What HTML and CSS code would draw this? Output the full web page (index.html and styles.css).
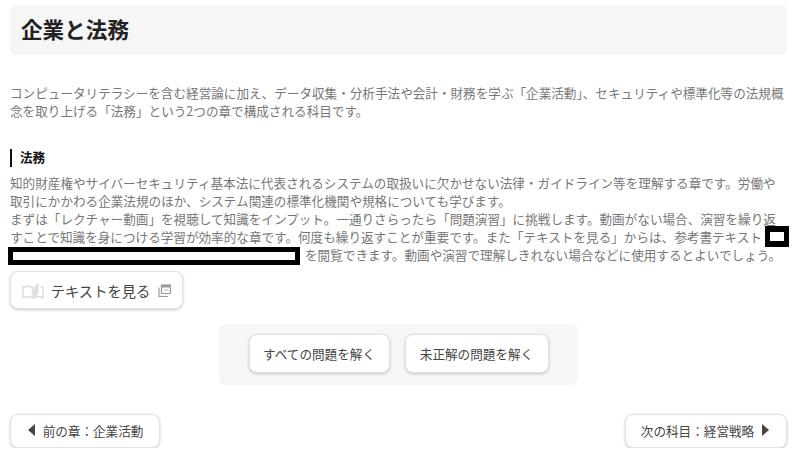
FILE: index.html
```html
<!DOCTYPE html>
<html lang="ja">
<head>
    <meta charset="UTF-8">
    <title>企業と法務</title>
    <link rel="stylesheet" href="styles.css">
</head>
<body>
    <div id="title-box">
        <h1>企業と法務</h1>
    </div>

    <p class="lead">コンピュータリテラシーを含む経営論に加え、データ収集・分析手法や会計・財務を学ぶ「企業活動」、セキュリティや標準化等の法規概念を取り上げる「法務」という2つの章で構成される科目です。</p>

    <h2>法務</h2>
    <p class="body-text">知的財産権やサイバーセキュリティ基本法に代表されるシステムの取扱いに欠かせない法律・ガイドライン等を理解する章です。労働や取引にかかわる企業法規のほか、システム関連の標準化機関や規格についても学びます。<br>まずは「レクチャー動画」を視聴して知識をインプット。一通りさらったら「問題演習」に挑戦します。動画がない場合、演習を繰り返すことで知識を身につける学習が効率的な章です。何度も繰り返すことが重要です。また「テキストを見る」からは、参考書テキスト<span class="mask mask-short"></span><br><span class="mask mask-long"></span>を閲覧できます。動画や演習で理解しきれない場合などに使用するとよいでしょう。</p>

    <a class="btn btn-text" href="#">
        <svg class="book" width="22" height="17" viewBox="0 0 22 17">
            <path d="M1 5c3-1 6.500-1 9.500 .5v10.500c-3-1.500-6.500-1.500-9.500-.5z" fill="none" stroke="#ddd" stroke-width="1.500"/>
            <path d="M11.500 5.500c1.500-1 3.500-3 5-5v10.500c-1.500 2-3.500 4-5 5z" fill="#ddd"/>
            <path d="M18.500 5h2.500v10.500c-3-1-6.500-1-9.500 .5" fill="none" stroke="#ddd" stroke-width="1.500"/>
        </svg>
        <span>テキストを見る</span>
        <svg class="open-icon" width="13" height="13" viewBox="0 0 13 13">
            <path d="M3.500 1h9v8.500h-9z" fill="none" stroke="#999" stroke-width="1.200"/>
            <path d="M3.500 1h9v2.500h-9z" fill="#999"/>
            <path d="M1 3.500v9h9" fill="none" stroke="#999" stroke-width="1.200"/>
            <path d="M5.500 6h5" stroke="#bbb" stroke-width="1"/>
        </svg>
    </a>

    <div id="solve-panel">
        <a class="btn btn-solve btn-all" href="#">すべての問題を解く</a>
        <a class="btn btn-solve btn-wrong" href="#">未正解の問題を解く</a>
    </div>

    <div id="pager">
        <a class="btn btn-page btn-prev" href="#"><span class="arrow arrow-left"></span>前の章：企業活動</a>
        <a class="btn btn-page btn-next" href="#">次の科目：経営戦略<span class="arrow arrow-right"></span></a>
    </div>
</body>
</html>
```

FILE: styles.css
```css
body {
    font-family: 'Noto Sans CJK JP', sans-serif;
    font-size: 12.6px;
    color: #777;
    background: #fff;
    margin: 0;
    padding: 5px 11px 0 10px;
}

#title-box {
    background: #f6f6f6;
    border-radius: 5px;
    height: 50px;
    box-sizing: border-box;
    display: flex;
    align-items: center;
    padding: 0 0 3px 11px;
}

h1 {
    margin: 0;
    font-size: 21.6px;
    font-weight: 700;
    color: #222;
}

.lead {
    margin: 29px 0 0;
    line-height: 18px;
}

h2 {
    margin: 29px 0 0;
    border-left: 2px solid #111;
    padding: 0 0 2px 8px;
    box-sizing: border-box;
    height: 18px;
    font-size: 12.6px;
    font-weight: 700;
    line-height: 16px;
    color: #111;
}

.body-text {
    margin: 7px 0 0;
    line-height: 18px;
}

.mask {
    display: inline-block;
    box-sizing: border-box;
    background: #fff;
    border: 5px solid #000;
    vertical-align: top;
}

.mask-short {
    width: 24px;
    height: 21px;
    border-width: 6px 5px;
    margin: -2px -12px -2px 3px;
}

.mask-long {
    width: 292px;
    height: 18px;
    margin: 1px 5px -1px -2px;
}

.btn {
    display: flex;
    align-items: center;
    justify-content: center;
    box-sizing: border-box;
    background: #fff;
    border: 1px solid #e2e2e2;
    border-radius: 8px;
    box-shadow: 0 1px 3px rgba(0, 0, 0, 0.2);
    color: #444;
    text-decoration: none;
}

.btn-text {
    width: 173px;
    height: 38px;
    margin-top: 7px;
    font-size: 14.3px;
}

.book {
    margin-right: 7px;
}

.open-icon {
    margin-left: 8px;
}

#solve-panel {
    display: flex;
    justify-content: center;
    gap: 15px;
    width: 359px;
    height: 61px;
    box-sizing: border-box;
    margin: 15px 0 0 209px;
    padding-top: 10px;
    background: #f6f6f6;
    border-radius: 6px;
}

.btn-solve {
    padding-bottom: 1px;
    height: 39px;
}

.btn-all {
    width: 141px;
}

.btn-wrong {
    width: 144px;
}

#pager {
    display: flex;
    justify-content: space-between;
    margin-top: 29px;
}

.btn-page {
    height: 34px;
    gap: 8px;
    padding-bottom: 2px;
}

.btn-prev {
    width: 150px;
    padding-left: 1px;
}

.btn-next {
    width: 162px;
    padding-right: 2px;
}

.arrow {
    width: 0;
    height: 0;
    border-top: 6px solid transparent;
    border-bottom: 6px solid transparent;
}

.arrow-left {
    border-right: 7px solid #444;
}

.arrow-right {
    border-left: 7px solid #444;
}
```
